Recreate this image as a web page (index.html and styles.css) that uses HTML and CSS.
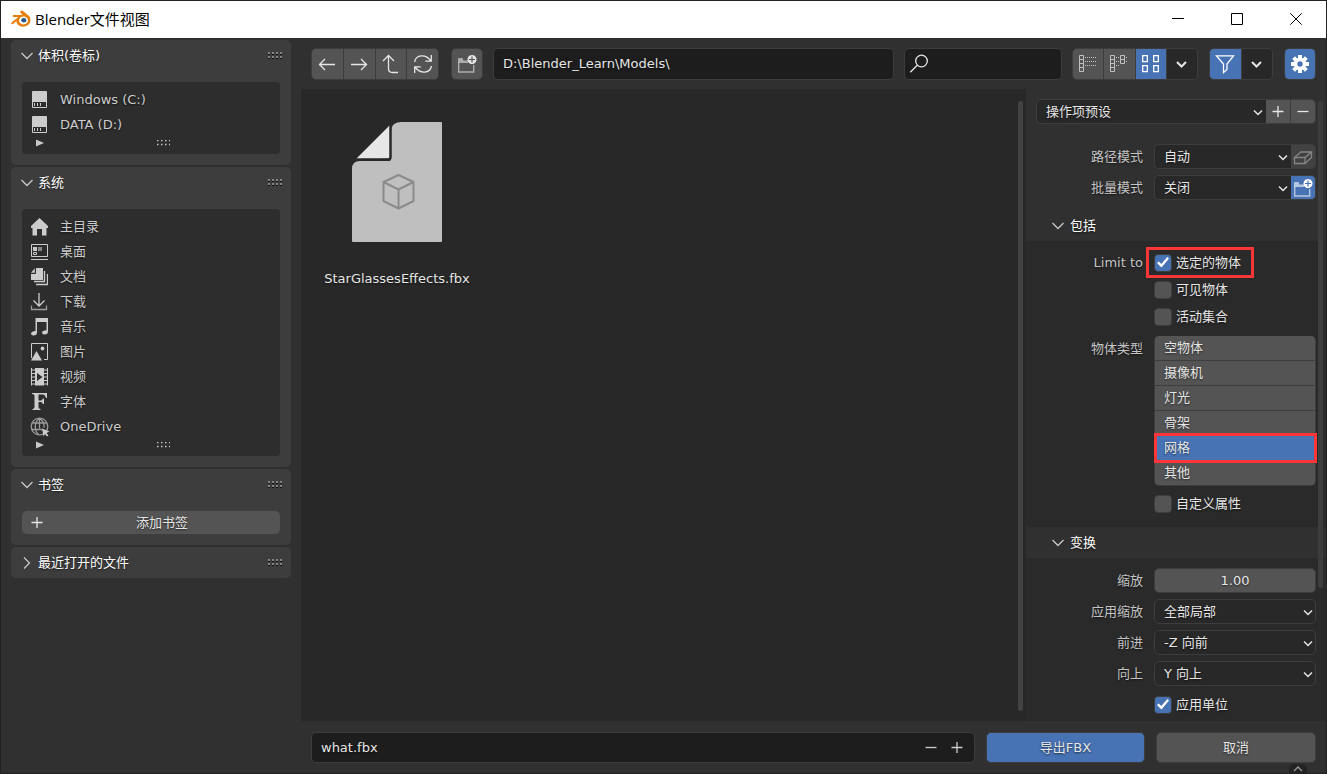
FILE: index.html
```html
<!DOCTYPE html>
<html lang="zh-CN">
<head>
<meta charset="utf-8">
<title>Blender文件视图</title>
<link rel="stylesheet" href="styles.css">
</head>
<body>
<svg class="defs" aria-hidden="true">
  <symbol id="down" viewBox="0 0 12 12"><path d="M.5 3l5.500 5.500L11.500 3"/></symbol>
  <symbol id="chev" viewBox="0 0 10 10"><path d="M1 3.500l4 4 4-4"/></symbol>
  <symbol id="plus" viewBox="0 0 12 12"><path d="M6 0v11M.5 5.500h11"/></symbol>
  <symbol id="minus" viewBox="0 0 12 12"><path d="M.5 5.500h11"/></symbol>
  <symbol id="newfolder" viewBox="0 0 20 20"><path d="M1.700 8.500V18h15V11" stroke-width="1.400" opacity=".6"/><path d="M1 9V5q0-1 1-1h3.500l1 2.500H11V9z" fill="currentColor" stroke="none" opacity=".6"/><path d="M15 1a4.500 4.500 0 1 0 .01 0zM14.400 2.500h1.200v2.400H18v1.200h-2.400v2.400h-1.200V6.100H12V4.900h2.400z" fill="currentColor" fill-rule="evenodd" stroke="none"/></symbol>
  <symbol id="disk" viewBox="0 0 18 18"><path fill="currentColor" stroke="none" fill-rule="evenodd" d="M3 0h13q1 0 1 1v15q0 1-1 1H3q-1 0-1-1V1q0-1 1-1zM3 11v5h13v-5z"/><path d="M4.500 12v3M7.500 12v3M10.500 12v3" stroke-width="1"/></symbol>
  <symbol id="grip" viewBox="0 0 15 7"><path d="M0 1h15M0 5h15" stroke="#111" stroke-width="2" stroke-dasharray="2 2"/><path d="M0 2.500h15M0 6.500h15" stroke="#111" stroke-width="1" stroke-dasharray="2 2"/><path d="M0 1h15M0 5h15" stroke="#aaa" stroke-width="1.400" stroke-dasharray="2 2"/></symbol>
  <symbol id="dots" viewBox="0 0 14 6"><path d="M1 .5h13M1 4.500h13" stroke="#c8c8c8" stroke-width="1.500" stroke-dasharray="1.500 2.500"/></symbol>
  <symbol id="tri" viewBox="0 0 8 8"><path d="M0 .5l8 3.500-8 3.500z" fill="#c8c8c8" stroke="none"/></symbol>
</svg>

<div class="window">
  <header class="titlebar">
    <svg class="logo" width="20" height="18" viewBox="0 0 20 18"><path d="M10 .8c.8-.5 1.500-.2 2 .3l6 5c2 2 2 6-.5 8.500-3 3-8.500 2.700-11-.3-.8-1-1.200-2.200-1.200-3.300L2.200 14c-1.500.6-2.500-.6-1.500-1.700L7.500 7H2.700c-1.300 0-1.300-2 0-2h9L9.700 3c-.7-.7-.4-1.600.3-2.200z" fill="#e87d0d"/><ellipse cx="12.500" cy="10.500" rx="4.500" ry="3.900" fill="#fff"/><ellipse cx="12.800" cy="10.300" rx="2.500" ry="2.200" fill="#265787"/></svg>
    <h1>Blender文件视图</h1>
    <div class="winctl">
      <button aria-label="最小化"><svg width="12" height="12"><path d="M0 5.500h12"/></svg></button>
      <button aria-label="最大化"><svg width="12" height="12"><path d="M.5.5h11v11H.5z"/></svg></button>
      <button aria-label="关闭"><svg width="12" height="12"><path d="M.3.3l11.400 11.400M11.700.3L.3 11.700"/></svg></button>
    </div>
  </header>

  <div class="workspace">
    <aside class="sidebar">
      <section class="panel">
        <h2><svg width="12" height="12"><use href="#down"/></svg>体积(卷标)<svg class="grip" width="15" height="7"><use href="#grip"/></svg></h2>
        <div class="panel-body">
          <ul class="list">
            <li><svg width="18" height="18"><use href="#disk"/></svg>Windows (C:)</li>
            <li><svg width="18" height="18"><use href="#disk"/></svg>DATA (D:)</li>
            <li class="resize"><svg class="tri" width="8" height="8"><use href="#tri"/></svg><svg width="14" height="6"><use href="#dots"/></svg></li>
          </ul>
        </div>
      </section>
      <section class="panel">
        <h2><svg width="12" height="12"><use href="#down"/></svg>系统<svg class="grip" width="15" height="7"><use href="#grip"/></svg></h2>
        <div class="panel-body">
          <ul class="list">
            <li><svg width="18" height="18"><path d="M9.500 0l8.500 8v2h-1.500v7.500H12V11H7v6.500H2.500V10H1V8z" fill="currentColor" stroke="none"/></svg>主目录</li>
            <li><svg width="18" height="18"><path d="M1.500 1.500h16v12h-16zM1 16.500h17" stroke-width="1"/><path d="M3 4h4v4H3z" fill="currentColor" stroke="none"/><path d="M8 4h4v4H8z" fill="#888" stroke="none"/><path d="M3.500 9.500h3v2h-3z" stroke-width="1"/></svg>桌面</li>
            <li><svg width="18" height="18"><path d="M6 0h7v12H1V6h4q1 0 1-1zM4.800.2V4.800H1z" fill="currentColor" stroke="none"/><path d="M14.500 3v10.500H4M17.500 6v10.500H6"/></svg>文档</li>
            <li><svg width="18" height="18"><path d="M9 0v13M3.500 7.500L9 13l5.500-5.500"/><path d="M1.500 12.500v4h15v-4" opacity=".7"/></svg>下载</li>
            <li><svg width="18" height="18"><path d="M5.500 0H18v13.500q0 3-3.500 3-2.500 0-2.500-1.700 0-2.200 4.500-2.600V4H7v10.500q0 3-3.500 3-2.500 0-2.500-1.700 0-2.400 4.500-2.800z" fill="currentColor" stroke="none"/></svg>音乐</li>
            <li><svg width="18" height="18"><path d="M1.500 15V.5h16v16H14" stroke-width="1"/><path d="M1 17.500L6.500 8l5.500 9.500z" fill="currentColor" stroke="none"/><circle cx="12.500" cy="5.500" r="1.900" fill="currentColor" stroke="none"/></svg>图片</li>
            <li><svg width="18" height="18"><path d="M5 0h9v17.500H5zM7 5v8l5.500-4z" fill="currentColor" fill-rule="evenodd" stroke="none"/><path d="M1.500 0v17.500M17.500 0v17.500M1.500 2h4M1.500 5.500h4M1.500 9h4M1.500 12.500h4M1.500 16h4M13.500 2h4M13.500 5.500h4M13.500 9h4M13.500 12.500h4M13.500 16h4" stroke-width="1.100"/></svg>视频</li>
            <li><svg width="18" height="18"><path d="M2 0h15v5h-1.200Q15.500 1.500 12.500 1.500H8.500v6h2.300Q12.500 7.500 12.800 5.500H14V11h-1.200Q12.500 9 10.800 9H8.500v5.500q0 1.300 2 1.500v1H2.500v-1q2-.2 2-1.500V2.500q0-1.300-2.500-1.500z" fill="currentColor" stroke="none"/></svg>字体</li>
            <li><svg class="globe" width="20" height="20"><g opacity=".7"><circle cx="9.500" cy="9.500" r="8.300"/><path d="M2.500 6h14M1.500 12.500h11M9.500 1.500v10M9.500 1.300C4 5.500 4 13.500 8.500 17.500M9.500 1.300c4 2.500 5 7 4.500 9.500"/></g><path d="M12 11.500l7.500 3-3 1.500 2 2.500-1.500 1-2-2.500-1.500 2.500z" fill="currentColor" stroke="none"/></svg>OneDrive</li>
            <li class="resize"><svg class="tri" width="8" height="8"><use href="#tri"/></svg><svg width="14" height="6"><use href="#dots"/></svg></li>
          </ul>
        </div>
      </section>
      <section class="panel">
        <h2><svg width="12" height="12"><use href="#down"/></svg>书签<svg class="grip" width="15" height="7"><use href="#grip"/></svg></h2>
        <div class="panel-body">
          <button class="btn add"><svg width="12" height="12"><use href="#plus"/></svg><span>添加书签</span></button>
        </div>
      </section>
      <section class="panel">
        <h2><svg class="closed" width="12" height="12"><use href="#down"/></svg>最近打开的文件<svg class="grip" width="15" height="7"><use href="#grip"/></svg></h2>
      </section>
    </aside>

    <main class="main">
      <nav class="toolbar">
        <div class="group nav">
          <button aria-label="后退"><svg width="18" height="20"><path d="M1 10.500h16M7 5l-5.500 5.500L7 16"/></svg></button>
          <button aria-label="前进"><svg width="18" height="20"><path d="M1 10.500h16M11 5l5.500 5.500L11 16"/></svg></button>
          <button aria-label="上级目录"><svg width="18" height="20"><path d="M6.500 1.500V14.500q0 4 4 4H16M1 7l5.500-5.500L12 7"/></svg></button>
          <button aria-label="刷新"><svg width="20" height="20"><path d="M1.500 8C3 .5 12.500-.5 18 7M18.300 1v6.200h-6M18.500 12C17 19.500 7.500 20.500 2 13M1.700 19v-6.200h6"/></svg></button>
        </div>
        <div class="group create"><button aria-label="新建文件夹"><svg width="20" height="20"><use href="#newfolder"/></svg></button></div>
        <input class="field path" type="text" aria-label="路径" value="D:\Blender_Learn\Models\">
        <div class="search">
          <svg width="20" height="20"><circle cx="12.500" cy="7" r="5.800"/><path d="M8.300 11.300L1.300 18.300"/></svg>
          <input class="field" type="text" aria-label="搜索">
        </div>
        <div class="group view">
          <button class="soft" aria-label="垂直列表"><svg width="20" height="20"><path d="M1.500 1.500h4v16h-4zM1.500 5.500h4M1.500 9.500h4M1.500 13.500h4"/><path d="M7 3.500h12M7 7.500h12M7 11.500h12" stroke-dasharray="1 1"/></svg></button>
          <button class="soft" aria-label="水平列表"><svg width="20" height="20"><path d="M1.500 1.500h4v16h-4zM1.500 5.500h4M1.500 9.500h4M1.500 13.500h4M11.500 1.500h4v8h-4zM11.500 5.500h4"/><path d="M7 3.500h3M7 7.500h3M7 11.500h3M17 3.500h2M17 7.500h2" stroke-dasharray="1 1"/></svg></button>
          <button class="on" aria-label="缩略图"><svg width="20" height="20"><path d="M1.700 1.700h4.600v6H1.700zM12.700 1.700h4.600v6h-4.600zM1.700 11.700h4.600v6H1.700zM12.700 11.700h4.600v6h-4.600z"/></svg></button>
          <button class="dark" aria-label="显示设置"><svg class="arrow" width="12" height="12"><path d="M1 4l4.500 4.500L10 4"/></svg></button>
        </div>
        <div class="group filter">
          <button class="on" aria-label="筛选"><svg width="20" height="20"><path d="M1.500 1.800h17L12 10v5.500L8.500 18.500V10z"/></svg></button>
          <button class="dark" aria-label="筛选设置"><svg class="arrow" width="12" height="12"><path d="M1 4l4.500 4.500L10 4"/></svg></button>
        </div>
        <div class="group settings"><button class="on" aria-label="设置"><svg width="20" height="20" viewBox="0 0 20 20"><g class="teeth"><path d="M10 1v18M1 10h18M3.600 3.600l12.800 12.800M16.400 3.600L3.600 16.400"/></g><circle cx="10" cy="10" r="6.200" fill="currentColor" stroke="none"/><circle cx="10" cy="10" r="2.700" fill="#4772b3" stroke="none"/></svg></button></div>
      </nav>

      <div class="content">
        <section class="files">
          <figure>
            <svg width="90" height="120" viewBox="0 0 90 120"><path d="M49 0h40q1 0 1 1v118q0 1-1 1H1q-1 0-1-1V47q0-8 8-8h29q2 0 2-2V10Q39 0 49 0z" fill="#bfbfbf"/><path d="M3 38L38.500 2.500V35.500q0 1-1 1z" fill="#e6e6e6"/><path d="M38.500 2v33q0 2.500-2.500 2.500H3" fill="none" stroke="#282828" stroke-width="2.500"/><g fill="none" stroke="#8b8b8b" stroke-width="2" stroke-linejoin="round"><path d="M46.500 53l15 7v19l-15 7.500-15-7.500V60zM31.500 60l15 7.500 15-7.500M46.500 67.500v19"/></g></svg>
            <figcaption>StarGlassesEffects.fbx</figcaption>
          </figure>
          <div class="scrollbar"></div>
        </section>

        <form class="options">
          <div class="preset">
            <div class="select"><select aria-label="操作项预设"><option>操作项预设</option></select><svg width="10" height="10"><use href="#chev"/></svg></div>
            <button type="button" class="side" aria-label="添加预设"><svg width="12" height="12"><use href="#plus"/></svg></button>
            <button type="button" class="side last" aria-label="移除预设"><svg width="12" height="12"><use href="#minus"/></svg></button>
          </div>
          <div class="rows modes">
            <div class="row"><label for="pathmode">路径模式</label><div class="joined"><div class="select"><select id="pathmode"><option>自动</option></select><svg width="10" height="10"><use href="#chev"/></svg></div><button type="button" class="side last off" disabled aria-label="嵌入纹理"><svg width="20" height="16"><path d="M1.500 9v5.500H12l6.500-6V3L12 8.500H1.500L8 3h10.500M12 8.500v6"/></svg></button></div></div>
            <div class="row"><label for="batchmode">批量模式</label><div class="joined"><div class="select"><select id="batchmode"><option>关闭</option></select><svg width="10" height="10"><use href="#chev"/></svg></div><button type="button" class="side last on" aria-label="批处理自身目录"><svg width="20" height="20"><use href="#newfolder"/></svg></button></div></div>
          </div>

          <h3><svg width="12" height="12"><use href="#down"/></svg>包括</h3>
          <div class="sub include">
            <div class="row top"><span class="lab">Limit to</span>
              <div class="checks">
                <label class="check marked"><input type="checkbox" checked>选定的物体</label>
                <label class="check"><input type="checkbox">可见物体</label>
                <label class="check"><input type="checkbox">活动集合</label>
              </div>
            </div>
            <div class="row top"><span class="lab">物体类型</span>
              <div class="types">
                <button type="button">空物体</button>
                <button type="button">摄像机</button>
                <button type="button">灯光</button>
                <button type="button">骨架</button>
                <button type="button" class="on marked" aria-pressed="true">网格</button>
                <button type="button">其他</button>
              </div>
            </div>
            <div class="row custom"><span></span><label class="check"><input type="checkbox">自定义属性</label></div>
          </div>

          <h3><svg width="12" height="12"><use href="#down"/></svg>变换</h3>
          <div class="sub rows transform">
            <div class="row"><label for="scale">缩放</label><input id="scale" class="number" type="text" value="1.00"></div>
            <div class="row"><label for="applyscale">应用缩放</label><div class="select"><select id="applyscale"><option>全部局部</option></select><svg width="10" height="10"><use href="#chev"/></svg></div></div>
            <div class="row"><label for="forward">前进</label><div class="select"><select id="forward"><option>-Z 向前</option></select><svg width="10" height="10"><use href="#chev"/></svg></div></div>
            <div class="row"><label for="up">向上</label><div class="select"><select id="up"><option>Y 向上</option></select><svg width="10" height="10"><use href="#chev"/></svg></div></div>
            <div class="row"><span></span><label class="check"><input type="checkbox" checked>应用单位</label></div>
          </div>
          <div class="scrollbar"></div>
        </form>
      </div>

      <footer class="footer">
        <div class="filename">
          <input type="text" aria-label="文件名" value="what.fbx">
          <button aria-label="减少"><svg width="12" height="12"><use href="#minus"/></svg></button>
          <button aria-label="增加"><svg width="12" height="12"><use href="#plus"/></svg></button>
        </div>
        <button class="btn primary">导出FBX</button>
        <button class="btn">取消</button>
        <div class="tab"><svg width="10" height="10"><path d="M1 7l4-4 4 4"/></svg></div>
      </footer>
    </main>
  </div>
</div>
</body>
</html>
```

FILE: styles.css
```css
* { box-sizing: border-box; }

body, h1, h2, h3, ul, figure { margin: 0; padding: 0; }

body {
  background: #303030;
  color: #e6e6e6;
  font: 13px/20px "DejaVu Sans", "Noto Sans CJK SC", sans-serif;
}

button, input, select {
  margin: 0;
  padding: 0;
  border: 0;
  background: none;
  color: inherit;
  font: inherit;
  text-shadow: inherit;
}

svg { flex: none; fill: none; stroke: currentColor; stroke-width: 1.3px; }
.teeth { stroke-width: 4px; }
.defs { position: absolute; width: 0; height: 0; }

.window {
  display: flex;
  flex-direction: column;
  height: 100vh;
  border: 1px solid #242122;
  overflow: hidden;
}

/* Title bar */
.titlebar {
  display: flex;
  flex: none;
  align-items: center;
  height: 37px;
  padding: 0 0 2px 10px;
  background: #fff;
  color: #000;
}
.titlebar h1 { flex: 1; margin-left: 4px; font: 400 15px/20px "Open Sans", "Noto Sans CJK SC", sans-serif; }
.logo { stroke: none; }
.winctl { display: flex; padding-right: 1px; }
.winctl button { display: grid; place-items: center; width: 59px; height: 34px; }
.winctl svg { stroke-width: 1px; }

.workspace {
  display: flex;
  flex: 1;
  min-height: 0;
  text-shadow: 0 1px 2px rgba(0, 0, 0, .6);
}

/* Left sidebar */
.sidebar {
  display: flex;
  flex: none;
  flex-direction: column;
  gap: 2px;
  width: 300px;
  padding: 2px 10px;
}
.panel { border-radius: 5px; background: #3d3d3d; }
.panel h2 {
  display: flex;
  align-items: center;
  gap: 5px;
  height: 31px;
  padding: 0 8px 0 10px;
  color: #fff;
  font-size: 13px;
  font-weight: 400;
}
.panel h2 svg { color: #c8c8c8; }
.panel h2 .grip { margin-left: auto; }
.closed { transform: rotate(-90deg); }
.panel-body { padding: 11px; }
.list { padding-top: 5px; border-radius: 4px; background: #2d2d2d; color: #ccc; list-style: none; }
.list li { display: flex; align-items: center; gap: 12px; height: 25px; padding-left: 8px; }
.list .globe { margin-right: -2px; }
.list .resize { display: grid; place-items: center; height: 17px; padding: 0 0 6px; }
.resize svg { grid-area: 1 / 1; margin-left: 24px; }
.resize .tri { justify-self: start; margin-left: 14px; }

.btn {
  border: 1px solid #3d3d3d;
  border-radius: 5px;
  background: #545454;
}
.btn.add { display: flex; align-items: center; width: 100%; height: 23px; padding: 0 9px; border: 0; }
.btn.add span { flex: 1; margin-left: 10px; }

/* Toolbar */
.main { display: flex; flex: 1; flex-direction: column; min-width: 0; }
.toolbar { display: flex; flex: none; gap: 10px; height: 51px; padding: 10px 10px 9px; }
.group {
  display: flex;
  flex: none;
  gap: 1px;
  height: 32px;
  border: 1px solid #3d3d3d;
  border-radius: 5px;
  background: #3d3d3d;
  overflow: hidden;
}
.group button { display: grid; flex: 1; place-items: center; background: #545454; }
.nav { width: 128px; }
.create { width: 32px; margin-left: 2px; }
.view { width: 126px; }
.filter { width: 64px; margin: 0 1px; }
.settings { width: 32px; }
.group .on { background: #4772b3; color: #fff; }
.group .dark { background: #282828; }
.group .soft { color: #c0c0c0; }
.soft svg { stroke-width: 1px; }
.arrow { stroke-width: 2px; }
.field {
  height: 32px;
  padding: 0 9px 2px;
  border: 1px solid #3d3d3d;
  border-radius: 5px;
  background: #1d1d1d;
}
.path { flex: 1; min-width: 0; }
.search { position: relative; flex: none; width: 158px; }
.search .field { width: 100%; padding-left: 32px; }
.search svg { position: absolute; top: 6px; left: 5px; }

/* File area */
.content { display: flex; flex: 1; min-height: 0; overflow: hidden; }
.files { position: relative; flex: 1; background: #282828; }
.files figure { width: 160px; margin: 33px 16px; text-align: center; }
.files figure svg { display: block; margin: 0 auto; stroke: none; }
.files figcaption { margin-top: 27px; }
.scrollbar { position: absolute; top: 12px; right: 3px; bottom: 10px; width: 5px; border-radius: 3px; background: #424242; }

/* Export options */
.options { position: relative; flex: none; width: 300px; padding-top: 10px; overflow: hidden; }
.options .scrollbar { bottom: 133px; background: #3d3d3d; }
.preset, .joined { display: flex; }
.preset { padding: 0 10px; }
.select { position: relative; flex: 1; min-width: 0; }
.select select {
  display: block;
  width: 100%;
  height: 25px;
  padding: 0 24px 0 9px;
  border: 1px solid #3d3d3d;
  border-radius: 5px;
  background: #282828;
  appearance: none;
}
.select svg { position: absolute; top: 8px; right: 3px; stroke-width: 1.5px; pointer-events: none; }
.preset select, .joined select { border-right: 0; border-radius: 5px 0 0 5px; }
.side { display: grid; place-items: center; width: 25px; height: 25px; border: 1px solid #3d3d3d; border-left: 0; background: #545454; }
.side.last { border-radius: 0 5px 5px 0; }
.side.on { background: #4772b3; color: #fff; }
.side.off { background: #424242; color: #858585; }

.rows { display: grid; gap: 6px; }
.row { display: grid; grid-template-columns: 117px 1fr; column-gap: 11px; align-items: center; min-height: 25px; padding-right: 10px; }
.row.top { align-items: start; }
.row > label:first-child, .lab { color: #c4c4c4; text-align: right; line-height: 25px; }
.modes { padding: 20px 0 10px; }
.options h3 {
  display: flex;
  align-items: center;
  gap: 6px;
  height: 31px;
  padding-left: 26px;
  color: #fff;
  font-size: 13px;
  font-weight: 400;
}
.options h3 svg { color: #c8c8c8; }
.sub { border-radius: 0 0 0 5px; background: #2a2a2a; }
.include { padding: 8px 0 13px; }
.checks { display: grid; grid-auto-rows: 27px; margin-bottom: 6px; }
.check { position: relative; display: flex; align-items: center; gap: 4px; }
.check input {
  display: grid;
  place-items: center;
  width: 18px;
  height: 18px;
  border: 1px solid #3d3d3d;
  border-radius: 4px;
  background: #545454;
  appearance: none;
}
.check input:checked { background: #4772b3; }
.check input:checked::after {
  width: 12px;
  height: 11px;
  background: #fff;
  clip-path: polygon(0 55%, 14% 40%, 36% 64%, 86% 0, 100% 14%, 37% 96%);
  content: "";
}
.include .row.top:first-child .lab { line-height: 27px; }
.types { display: grid; gap: 1px; padding: 0 1px 1px; border-radius: 5px; background: #3d3d3d; }
.types button { position: relative; height: 24px; padding: 0 0 1px 9px; background: #545454; text-align: left; }
.types button:first-child { border-radius: 4px 4px 0 0; }
.types button:last-child { border-radius: 0 0 4px 4px; }
.types .on { z-index: 1; background: #4772b3; }
.marked::after { position: absolute; border: 3px solid #fb3636; content: ""; pointer-events: none; }
.check.marked::after { inset: -2px 62px -2px -8px; }
.types .marked::after { inset: -3px -2px -3px -1px; }
.custom { padding-top: 8px; }
.transform { padding: 10px 0; }
.number { width: 100%; height: 25px; border: 1px solid #3d3d3d; border-radius: 5px; background: #545454; text-align: center; }

/* Footer */
.footer { position: relative; display: flex; flex: none; gap: 11px; height: 52px; padding: 11px 10px 10px; }
.filename { display: flex; flex: 1; min-width: 0; height: 31px; padding: 0 4px 0 9px; border: 1px solid #3d3d3d; border-radius: 5px; background: #1d1d1d; }
.filename input { flex: 1; min-width: 0; }
.filename button { display: grid; place-items: center; width: 26px; color: #ccc; }
.footer .btn { flex: none; width: 160px; height: 31px; }
.footer .primary { width: 159px; background: #4772b3; }
.tab { position: absolute; right: 19px; bottom: 0; display: grid; place-items: center; width: 18px; height: 9px; border-radius: 5px 5px 0 0; background: #232323; color: #999; }
```
